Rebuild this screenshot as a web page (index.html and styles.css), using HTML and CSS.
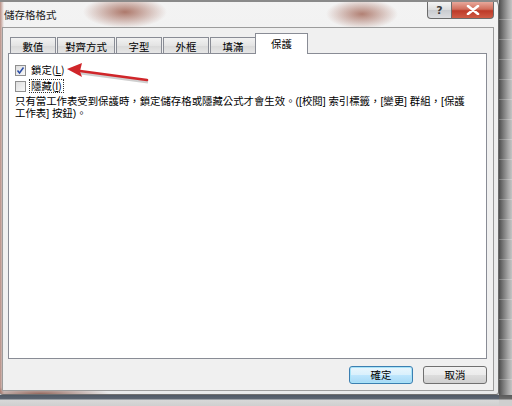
FILE: index.html
```html
<!DOCTYPE html>
<html lang="zh-Hant">
<head>
    <meta charset="UTF-8">
    <title>儲存格格式</title>
    <link rel="stylesheet" href="styles.css">
</head>
<body>

<div class="screen">
    <!-- 對話框 -->
    <div class="window">
        <div class="titlebar">
            <span class="title">儲存格格式</span>
            <div class="caption-btns">
                <div class="cap-btn help">?</div>
                <div class="cap-btn close">
                    <svg width="14" height="10" viewBox="0 0 14 10">
                        <path d="M2 1 L12 9 M12 1 L2 9" stroke="#fff" stroke-width="2.6" stroke-linecap="round"/>
                    </svg>
                </div>
            </div>
        </div>

        <div class="client">
            <div class="tabs">
                <div class="tab">數值</div>
                <div class="tab w58">對齊方式</div>
                <div class="tab">字型</div>
                <div class="tab">外框</div>
                <div class="tab">填滿</div>
                <div class="tab active">保護</div>
            </div>

            <div class="panel">
                <div class="check-row">
                    <span class="box checked">
                        <svg width="9" height="9" viewBox="0 0 9 9">
                            <path d="M1.5 4.5 L3.5 7 L7.5 1.5" fill="none" stroke="#2b4ea8" stroke-width="1.5"/>
                        </svg>
                    </span>
                    <span class="label">鎖定(<u>L</u>)</span>
                </div>
                <div class="check-row">
                    <span class="box"></span>
                    <span class="label focus">隱藏(<u>I</u>)</span>
                </div>
                <p class="note">只有當工作表受到保護時，鎖定儲存格或隱藏公式才會生效。([校閱] 索引標籤，[變更] 群組，[保護<br>工作表] 按鈕)。</p>

                <!-- 標示箭頭 -->
                <svg class="arrow" width="160" height="40" viewBox="0 0 160 40">
                    <path d="M72 19 L139 28" stroke="#b0b0b0" stroke-width="3" opacity="0.6"/>
                    <path d="M71 17 L138 26" stroke="#d0262a" stroke-width="2.6" stroke-linecap="round"/>
                    <path d="M58 15 L73 9 L71 17 L73 23 Z" fill="#d0262a"/>
                </svg>
            </div>

            <div class="actions">
                <button class="btn default">確定</button>
                <button class="btn">取消</button>
            </div>
        </div>
    </div>

    <div class="side-strip"></div>
    <div class="bottom-strip"></div>
    <div class="corner"></div>
</div>

</body>
</html>
```

FILE: styles.css
```css
* {
    margin: 0;
    padding: 0;
    box-sizing: border-box;
}
body {
    width: 512px;
    height: 406px;
    overflow: hidden;
    background: #c9c9c9;
    font-family: "Noto Sans CJK TC", "Liberation Sans", sans-serif;
    font-size: 10.4px;
    color: #000;
}
.screen {
    display: grid;
    grid-template-columns: 499px 13px;
    grid-template-rows: 395px 11px;
}

/* 視窗外框 (Aero 玻璃) */
.window {
    display: flex;
    flex-direction: column;
    border-radius: 0 6px 3px 3px;
    border-right: 1px solid #6a6a6a;
    border-bottom: 1px solid #707070;
    background:
        radial-gradient(ellipse 42px 16px at 125px 12px, rgba(150, 80, 62, 0.75), rgba(150, 80, 62, 0) 100%),
        radial-gradient(ellipse 36px 15px at 362px 14px, rgba(150, 80, 62, 0.7), rgba(150, 80, 62, 0) 100%),
        radial-gradient(ellipse 70px 8px at 40px 394px, rgba(120, 60, 45, 0.75), rgba(120, 60, 45, 0) 100%),
        linear-gradient(to right, rgba(160, 100, 85, 0.7) 0, rgba(160, 100, 85, 0) 4px),
        linear-gradient(to bottom, #f3f3f3 0, #ededed 40%, #e8e9ea 100%);
}
.titlebar {
    height: 27px;
    display: flex;
    justify-content: space-between;
    align-items: flex-start;
    border-top: 2px solid #8a8a8a;
}
.title {
    margin: 5px 0 0 4px;
    color: #1c1c1c;
    font-size: 10.5px;
}
.caption-btns {
    display: flex;
    margin-right: 4px;
}
.cap-btn {
    height: 17px;
    display: flex;
    align-items: center;
    justify-content: center;
    border: 1px solid #6b6b6b;
    border-top: none;
}
.help {
    width: 25px;
    border-radius: 0 0 0 4px;
    background: linear-gradient(to bottom, #f4f4f4, #dcdcdc 50%, #c9cbcf 51%, #dcdde0);
    color: #3c3c3c;
    font-family: "DejaVu Sans", sans-serif;
    font-weight: bold;
    font-size: 11px;
}
.close {
    width: 42px;
    border-left: none;
    border-radius: 0 0 4px 0;
    background: linear-gradient(to bottom, #e8a89b, #d16e5c 45%, #bd3a28 55%, #cf5b45);
}

/* 內容區 */
.client {
    flex: 1;
    margin: 0 4px 3px 2px;
    border: 1px solid #9c9c9c;
    background: #f0f0f0;
    display: flex;
    flex-direction: column;
    padding: 5px 6px 6px 5px;
}
.tabs {
    display: flex;
    align-items: flex-end;
    margin-left: 2px;
    height: 20px;
    position: relative;
    z-index: 1;
}
.tab {
    width: 46px;
    height: 16px;
    margin-right: 1px;
    border: 1px solid #898c95;
    border-bottom: none;
    background: linear-gradient(to bottom, #f2f2f2, #e4e4e4 50%, #d9d9d9 51%, #e6e6e6);
    display: flex;
    justify-content: center;
    align-items: center;
    padding-top: 1px;
}
.w58 { width: 58px; }
.tab.active {
    width: 53px;
    height: 21px;
    margin-left: -2px;
    margin-bottom: -1px;
    background: #fff;
    padding-bottom: 3px;
}
.panel {
    position: relative;
    height: 306px;
    border: 1px solid #898c95;
    background: #fff;
    padding: 8px 6px;
}
.check-row {
    display: flex;
    align-items: center;
    height: 16px;
}
.box {
    width: 11px;
    height: 11px;
    border: 1px solid #8f8f8f;
    background: linear-gradient(135deg, #dedede, #f8f8f8);
    display: flex;
    align-items: center;
    justify-content: center;
    margin-right: 4px;
}
.label {
    line-height: 12px;
    padding: 0 1px;
}
.focus {
    outline: 1px dotted #333;
}
.note {
    margin-top: 2px;
    font-family: "Liberation Sans", "Noto Sans CJK TC", sans-serif;
    line-height: 12px;
}
.arrow {
    position: absolute;
    left: 0;
    top: 0;
}

/* 按鈕 */
.actions {
    display: flex;
    justify-content: flex-end;
    gap: 10px;
    margin-top: auto;
}
.btn {
    width: 64px;
    height: 18px;
    border: 1px solid #707070;
    border-radius: 3px;
    background: linear-gradient(to bottom, #f2f2f2, #ebebeb 50%, #dddddd 51%, #cfcfcf);
    font-family: "Noto Sans CJK TC", sans-serif;
    font-size: 10.4px;
    color: #000;
    line-height: 14px;
}
.btn.default {
    border-color: #3c7fb1;
    box-shadow: inset 0 0 0 1px #a8e3f8;
    background: linear-gradient(to bottom, #eaf6fd, #d9f0fc 50%, #bee6fd 51%, #a7d9f5);
}

/* 背景 */
.side-strip {
    background:
        repeating-linear-gradient(to bottom, rgba(255, 255, 255, 0) 0, rgba(255, 255, 255, 0) 19px, rgba(255, 255, 255, 0.25) 19px, rgba(255, 255, 255, 0.25) 20px),
        linear-gradient(to right, #4e4e4e, #7c7c7c 35%, #a6a6a6 70%, #c4c4c4);
}
.bottom-strip {
    background: linear-gradient(to bottom, #4f5865 0, #5d6672 4px, #d8d8d8 5px, #cfcfcf);
}
.corner {
    background: linear-gradient(to bottom, #5a5a5a 0, #6a6a6a 4px, #cfcfcf 5px);
}
```
